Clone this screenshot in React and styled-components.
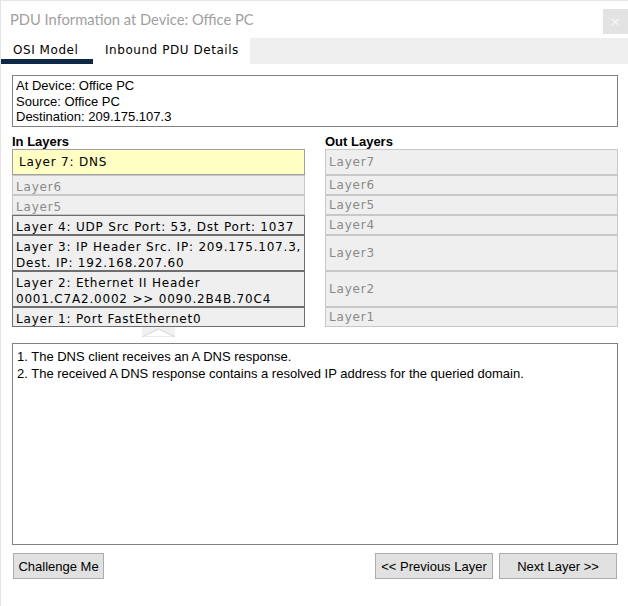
import React from "react";
import styled, { createGlobalStyle } from "styled-components";

const Global = createGlobalStyle`
  html, body { margin: 0; padding: 0; background: #ffffff; }
  * { box-sizing: border-box; }
`;

const Window = styled.div`
  width: 628px;
  height: 606px;
  background: #ffffff;
  border-top: 1px solid #e6e6e6;
  border-left: 1px solid #e4e4e4;
  display: flex;
  flex-direction: column;
  overflow: hidden;
`;

const TitleBar = styled.div`
  height: 37px;
  display: flex;
  justify-content: space-between;
  align-items: flex-start;
  padding-left: 9px;
`;

const Title = styled.div`
  font-family: Lato, "Open Sans", sans-serif;
  font-size: 14.7px;
  color: #a0a0a0;
  line-height: 20px;
  margin-top: 8px;
`;

const CloseButton = styled.div`
  width: 25px;
  height: 25px;
  margin-top: 8px;
  background: #e3e3e3;
  color: #f7f7f7;
  font-family: "DejaVu Sans", sans-serif;
  font-size: 13px;
  display: flex;
  align-items: center;
  justify-content: center;
`;

const TabBar = styled.div`
  height: 26px;
  background: #efefef;
  display: flex;
`;

const Tab = styled.div`
  height: 26px;
  width: ${(p) => p.$w}px;
  background: #ffffff;
  font-family: "DejaVu Sans", Verdana, sans-serif;
  font-size: 12px;
  letter-spacing: 0.55px;
  color: #000;
  padding-left: ${(p) => p.$pl}px;
  padding-top: 3px;
  line-height: 18px;
  border-bottom: 5px solid ${(p) => (p.$active ? "#0f2747" : "#ffffff")};
`;

const Content = styled.div`
  padding: 11px 10px 0 11px;
  display: flex;
  flex-direction: column;
`;

const InfoBox = styled.div`
  height: 52px;
  border: 1px solid #808080;
  padding: 2px 3px;
  font-family: "Liberation Sans", Arial, sans-serif;
  font-size: 13px;
  line-height: 15.5px;
  color: #000;
`;

const Columns = styled.div`
  display: grid;
  grid-template-columns: 293px 293px;
  column-gap: 20px;
`;

const Column = styled.div`
  display: flex;
  flex-direction: column;
`;

const Heading = styled.div`
  font-family: "Liberation Sans", Arial, sans-serif;
  font-weight: bold;
  font-size: 13px;
  line-height: 14px;
  padding-top: 8px;
  height: 22px;
  color: #000;
`;

const Row = styled.div`
  height: ${(p) => p.$h}px;
  border: 1px solid ${(p) => (p.$kind === "active" ? "#a0a0a0" : p.$kind === "on" ? "#6e6e6e" : "#c8c8c8")};
  background: ${(p) => (p.$kind === "active" ? "#ffffc4" : "#efefef")};
  color: ${(p) => (p.$kind === "off" ? "#8a8a8a" : "#000")};
  font-family: "DejaVu Sans", Verdana, sans-serif;
  font-size: 12px;
  letter-spacing: 0.8px;
  line-height: 16px;
  padding-left: ${(p) => (p.$kind === "active" ? 6 : 3)}px;
  padding-top: ${(p) => (p.$center ? 0 : 2.5)}px;
  white-space: nowrap;
  display: flex;
  flex-direction: column;
  justify-content: ${(p) => (p.$center ? "center" : "flex-start")};
`;

const ArrowWrap = styled.div`
  height: 16px;
  width: 293px;
  display: flex;
  justify-content: center;
`;

const DescBox = styled.div`
  height: 202px;
  border: 1px solid #808080;
  padding: 4px 4px;
  font-family: "Liberation Sans", Arial, sans-serif;
  font-size: 13px;
  line-height: 17px;
  color: #000;
`;

const ButtonRow = styled.div`
  margin-top: 8px;
  display: flex;
  gap: 6px;
  padding-left: 1px;
  padding-right: 1px;
`;

const Spacer = styled.div`
  flex: 1;
`;

const Button = styled.div`
  height: 26px;
  width: ${(p) => p.$w}px;
  background: #e1e1e1;
  border: 1px solid #adadad;
  font-family: "Liberation Sans", Arial, sans-serif;
  font-size: 13px;
  color: #000;
  display: flex;
  align-items: center;
  justify-content: center;
`;

const inLayers = [
  { kind: "active", h: 26, lines: ["Layer 7: DNS"], center: true },
  { kind: "off", h: 20, lines: ["Layer6"] },
  { kind: "off", h: 20, lines: ["Layer5"] },
  { kind: "on", h: 20, lines: ["Layer 4: UDP Src Port: 53, Dst Port: 1037"] },
  { kind: "on", h: 36, lines: ["Layer 3: IP Header Src. IP: 209.175.107.3,", "Dest. IP: 192.168.207.60"] },
  { kind: "on", h: 36, lines: ["Layer 2: Ethernet II Header", "0001.C7A2.0002 >> 0090.2B4B.70C4"] },
  { kind: "on", h: 20, lines: ["Layer 1: Port FastEthernet0"] },
];

const outLayers = [
  { h: 26, label: "Layer7" },
  { h: 20, label: "Layer6" },
  { h: 20, label: "Layer5" },
  { h: 20, label: "Layer4" },
  { h: 36, label: "Layer3" },
  { h: 36, label: "Layer2" },
  { h: 20, label: "Layer1" },
];

export default function App() {
  return (
    <>
      <Global />
      <Window>
        <TitleBar>
          <Title>PDU Information at Device: Office PC</Title>
          <CloseButton>×</CloseButton>
        </TitleBar>
        <TabBar>
          <Tab $w={92} $pl={12} $active>OSI Model</Tab>
          <Tab $w={157} $pl={12}>Inbound PDU Details</Tab>
        </TabBar>
        <Content>
          <InfoBox>
            <div>At Device: Office PC</div>
            <div>Source: Office PC</div>
            <div>Destination: 209.175.107.3</div>
          </InfoBox>
          <Columns>
            <Column>
              <Heading>In Layers</Heading>
              {inLayers.map((l, i) => (
                <Row key={i} $h={l.h} $kind={l.kind} $center={l.center}>
                  {l.lines.map((t, j) => (
                    <div key={j}>{t}</div>
                  ))}
                </Row>
              ))}
            </Column>
            <Column>
              <Heading>Out Layers</Heading>
              {outLayers.map((l, i) => (
                <Row key={i} $h={l.h} $kind="off" $center>
                  <div>{l.label}</div>
                </Row>
              ))}
            </Column>
          </Columns>
          <ArrowWrap>
            <svg width="33" height="10" viewBox="0 0 33 10">
              <rect x="0" y="0" width="33" height="10" fill="#f1f1f1" />
              <polygon points="0,10 16.5,2 33,10" fill="#ffffff" stroke="#d6d6d6" strokeWidth="1" />
            </svg>
          </ArrowWrap>
          <DescBox>
            <div>1. The DNS client receives an A DNS response.</div>
            <div>2. The received A DNS response contains a resolved IP address for the queried domain.</div>
          </DescBox>
          <ButtonRow>
            <Button $w={91}>Challenge Me</Button>
            <Spacer />
            <Button $w={118}>&lt;&lt; Previous Layer</Button>
            <Button $w={118}>Next Layer &gt;&gt;</Button>
          </ButtonRow>
        </Content>
      </Window>
    </>
  );
}
